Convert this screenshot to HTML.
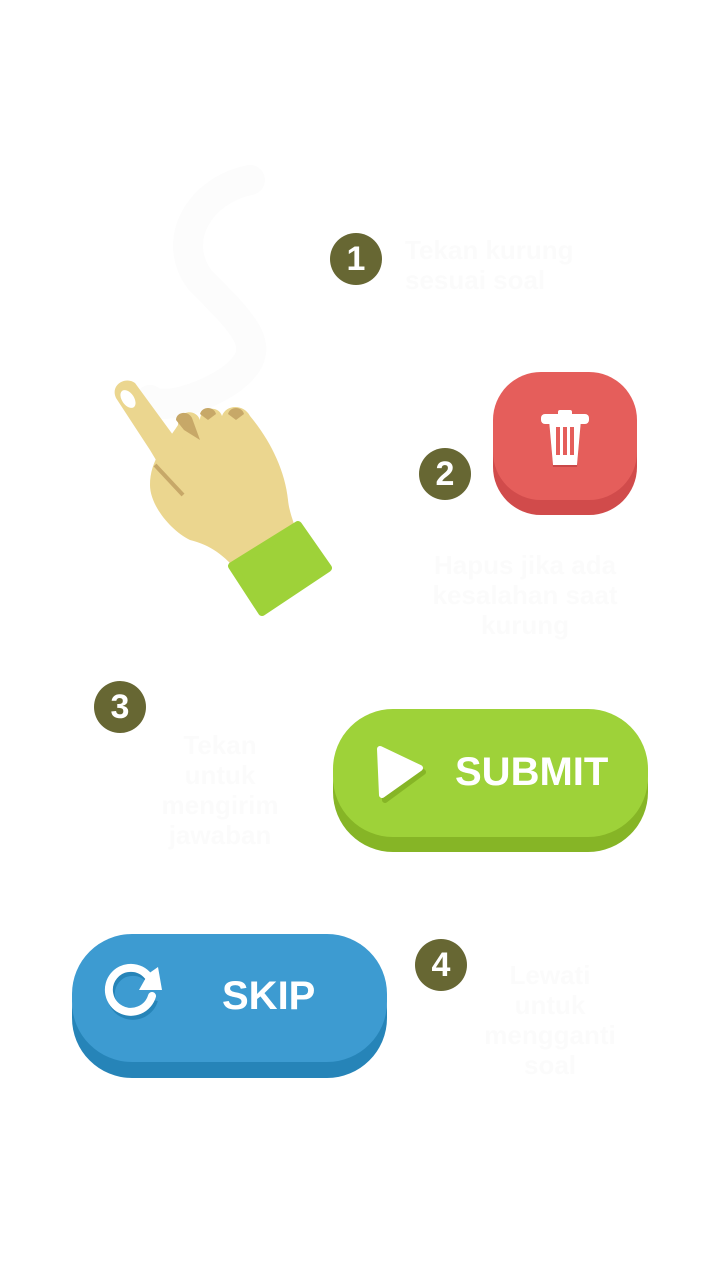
<!DOCTYPE html>
<html><head><meta charset="utf-8"><style>
body{margin:0;width:720px;height:1280px;background:#fff;position:relative;overflow:hidden;font-family:"Liberation Sans",sans-serif}
.c{position:absolute;width:52px;height:52px;border-radius:50%;background:#676733;color:#fff;font-weight:bold;font-size:34px;text-align:center;line-height:52px}
.f{position:absolute;color:#fbfbfb;font-weight:bold;font-size:26px;text-align:center;line-height:30px}
.lbl{position:absolute;color:#fff;font-weight:bold;font-size:40px;font-family:"Liberation Sans",sans-serif}
</style></head><body>
<svg width="720" height="1280" style="position:absolute;left:0;top:0">
<path d="M250 180 C200 190 170 240 200 280 C250 330 270 350 230 380 C200 400 160 410 150 400" fill="none" stroke="#fcfcfc" stroke-width="30" stroke-linecap="round"/>
<rect x="493" y="387" width="144" height="128" rx="48" fill="#d14b4b"/>
<rect x="493" y="372" width="144" height="128" rx="48" fill="#e55e5b"/>
<path d="M549 421 h32 l-4 46 h-24z" fill="#c94848"/>
<rect x="541" y="414" width="48" height="10" rx="4" fill="#fff"/>
<rect x="558" y="410" width="14" height="6" rx="2" fill="#fff"/>
<path d="M549 420 h32 l-4 45 h-24z" fill="#fff"/>
<rect x="556" y="427" width="4" height="28" fill="#e55e5b"/><rect x="563" y="427" width="4" height="28" fill="#e55e5b"/><rect x="570" y="427" width="4" height="28" fill="#e55e5b"/>
<rect x="333" y="724" width="315" height="128" rx="60" fill="#86b526"/>
<rect x="333" y="709" width="315" height="128" rx="60" fill="#9ed239"/>
<path d="M383 752 L423 772 L385 800 Z" fill="#86b526" stroke="#86b526" stroke-width="6" stroke-linejoin="round"/>
<path d="M380 749 L420 768 L382 795 Z" fill="#fff" stroke="#fff" stroke-width="6" stroke-linejoin="round"/>
<rect x="72" y="950" width="315" height="128" rx="60" fill="#2684b8"/>
<rect x="72" y="934" width="315" height="128" rx="60" fill="#3d9bd1"/>
<path d="M150 980 A22 22 0 1 0 154 1000" fill="none" stroke="#2684b8" stroke-width="8"/>
<path d="M148 976 A22 22 0 1 0 152 996" fill="none" stroke="#fff" stroke-width="8" stroke-linecap="round"/>
<path d="M148 974 L158 967 L162 990 L139 990 Z" fill="#fff"/>
<path d="M178 425 C178 410 196 408 200 420 C200 408 218 404 222 416 C226 404 244 404 250 416 C270 440 285 470 288 500 C290 520 300 530 295 545 L240 575 C225 555 210 545 190 540 C170 530 150 505 150 485 C150 460 165 445 178 425Z" fill="#ebd68f"/>
<path d="M176 420 C176 412 188 410 192 418 L200 440 L184 430Z" fill="#c7a868"/>
<path d="M200 414 C202 406 214 406 216 414 L208 420Z" fill="#c7a868"/>
<path d="M228 414 C230 406 242 406 244 414 L236 420Z" fill="#c7a868"/>
<path d="M116 398 C110 385 125 376 135 383 L195 465 L180 500 L150 450 Z" fill="#ebd68f"/>
<path d="M155 465 L183 495" stroke="#c7a868" stroke-width="4"/>
<ellipse cx="128" cy="399" rx="6" ry="10" transform="rotate(-35 128 399)" fill="#fff"/>
<path d="M232 566 L298 525 L328 568 L262 612 Z" fill="#9ed239" stroke="#9ed239" stroke-width="8" stroke-linejoin="round"/>
</svg>
<div class="c" style="left:330px;top:233px">1</div>
<div class="c" style="left:419px;top:448px">2</div>
<div class="c" style="left:94px;top:681px">3</div>
<div class="c" style="left:415px;top:939px">4</div>
<div class="lbl" style="left:455px;top:750px">SUBMIT</div>
<div class="lbl" style="left:222px;top:974px">SKIP</div>
<div class="f" style="left:405px;top:235px;width:190px;text-align:left">Tekan kurung<br>sesuai soal</div>
<div class="f" style="left:410px;top:550px;width:230px">Hapus jika ada<br>kesalahan saat<br>kurung</div>
<div class="f" style="left:120px;top:730px;width:200px">Tekan<br>untuk<br>mengirim<br>jawaban</div>
<div class="f" style="left:450px;top:960px;width:200px">Lewati<br>untuk<br>mengganti<br>soal</div>
</body></html>
